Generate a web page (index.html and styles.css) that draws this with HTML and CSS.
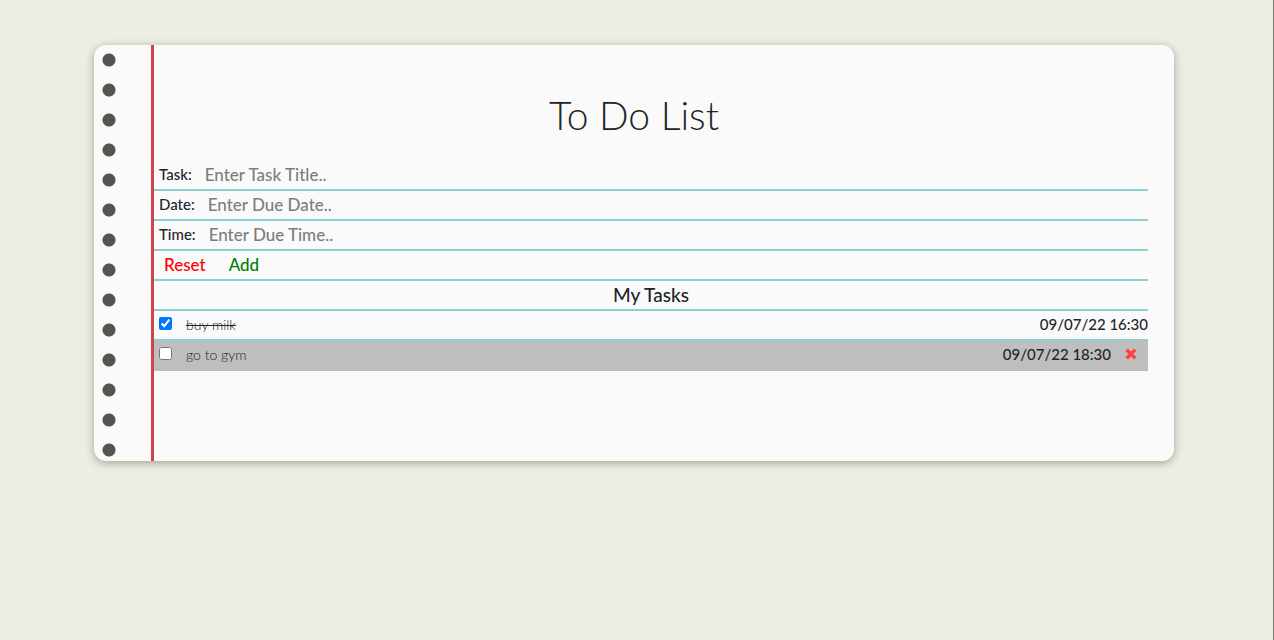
FILE: index.html
```html
<!DOCTYPE html>
<html lang="en">
<head>
<meta charset="utf-8">
<meta name="viewport" content="width=device-width, initial-scale=1">
<title>To Do List</title>
<link rel="stylesheet" href="styles.css">
</head>
<body>
<main class="paper">
  <h1 class="title">To Do List</h1>
  <div class="sheet">
    <form class="entry">
      <div class="line"><label class="caption" for="task">Task:</label><input class="field" id="task" type="text" placeholder="Enter Task Title.."></div>
      <div class="line"><label class="caption" for="date">Date:</label><input class="field" id="date" type="text" placeholder="Enter Due Date.."></div>
      <div class="line"><label class="caption" for="time">Time:</label><input class="field" id="time" type="text" placeholder="Enter Due Time.."></div>
      <div class="line actions"><button class="btn reset" type="reset">Reset</button><button class="btn add" type="button">Add</button></div>
    </form>
    <h2 class="line subtitle">My Tasks</h2>
    <ul class="tasks">
      <li class="line">
        <input class="check" id="t1" type="checkbox" checked>
        <label class="name done" for="t1">buy milk</label>
        <span class="due">09/07/22 16:30</span>
      </li>
      <li class="line active">
        <input class="check" id="t2" type="checkbox">
        <label class="name" for="t2">go to gym</label>
        <span class="due">09/07/22 18:30</span>
        <button class="remove" type="button" aria-label="Delete task">
          <svg viewBox="0 0 12 12" width="12" height="12" aria-hidden="true"><path d="M2.9 2.9 9.1 9.1M9.1 2.9 2.9 9.1" fill="none" stroke="#ff4040" stroke-width="3.4" stroke-linecap="square"/></svg>
        </button>
      </li>
    </ul>
  </div>
</main>
</body>
</html>
```
FILE: styles.css
```css
* { box-sizing: border-box; }

body {
  margin: 0;
  min-height: 100vh;
  padding: 45px 99px 45px 94px;
  border-right: 1px solid #72796e;
  background: #eeede4;
  color: #212529;
  font-family: Lato, "Open Sans", sans-serif;
  font-size: 15px;
}

.paper {
  padding: 40px 26px 90px 0;
  border-radius: 12px;
  background:
    linear-gradient(#d0434b, #d0434b) 57px 0 / 3px 100% no-repeat,
    radial-gradient(circle at 15px 15px, #57534e 6px, transparent 7px) 0 0 / 30px 30px repeat-y,
    #fafafa;
  box-shadow: 0 2px 8px rgba(70, 70, 50, 0.45);
}

.title {
  margin: 0 0 16px 26px;
  font-size: 39px;
  font-weight: 300;
  line-height: 60px;
  text-align: center;
}

.sheet { margin-left: 60px; }

.line {
  display: flex;
  align-items: center;
  height: 30px;
  padding: 0 0 2px 5px;
  border-bottom: 2px solid #8ed0d1;
}

.caption { font-weight: 500; }

.field {
  flex: 1;
  min-width: 0;
  margin-left: 13px;
  padding: 0;
  border: 0;
  outline: 0;
  background: transparent;
  color: inherit;
  font: 500 17px Lato, sans-serif;
}

.field::placeholder { color: #7d7d7d; opacity: 1; }

.actions { gap: 23px; padding-left: 10px; }

.btn {
  padding: 0;
  border: 0;
  background: transparent;
  font: 500 17px Lato, sans-serif;
  cursor: pointer;
}

.reset { color: #ff0000; }
.add { color: #008000; }

.subtitle {
  justify-content: center;
  margin: 0;
  padding-left: 0;
  font-size: 19px;
  font-weight: 500;
}

.tasks { margin: 0; padding: 0; list-style: none; }

.check { width: 13px; height: 13px; margin: 0 14px 1px 0; }

.name { font-size: 14px; font-weight: 300; }

.done { text-decoration: line-through; }

.due { margin-left: auto; font-weight: 500; }

.active { border-bottom-color: #bebebe; background: #bebebe; }

.remove {
  display: flex;
  margin: 0 11px 0 14px;
  padding: 0;
  border: 0;
  background: transparent;
  cursor: pointer;
}
```
